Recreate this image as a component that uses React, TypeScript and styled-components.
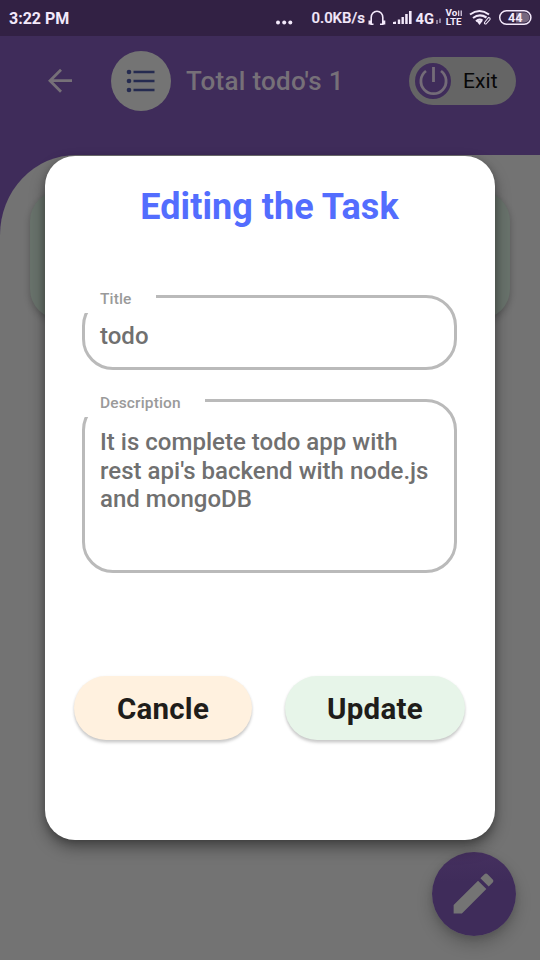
import React from 'react';
import styled, { createGlobalStyle } from 'styled-components';

const GlobalStyle = createGlobalStyle`
  * { box-sizing: border-box; }
  body { margin: 0; font-family: Roboto, sans-serif; }
  button { border: 0; font-family: inherit; }
`;

const Screen = styled.div`
  position: relative;
  display: flex;
  flex-direction: column;
  width: 540px;
  height: 960px;
  overflow: hidden;
  background: #3f2c5a;
`;

const StatusBar = styled.div`
  display: flex;
  align-items: center;
  justify-content: space-between;
  height: 36px;
  padding: 0 8px 0 9px;
  background: #322144;
  color: #f3e9fb;
`;

const Clock = styled.span`
  font-size: 16px;
  font-weight: 700;
  white-space: nowrap;
`;

const StatusIcons = styled.svg`
  display: block;
  width: 264px;
  height: 36px;
`;

const AppBar = styled.header`
  display: flex;
  align-items: center;
  height: 119px;
  padding: 0 24px 29px 47px;
`;

const BackIcon = styled.svg`
  width: 26px;
  height: 26px;
  margin-right: 38px;
`;

const ListBadge = styled.div`
  display: grid;
  place-items: center;
  width: 60px;
  height: 60px;
  border-radius: 50%;
  background: #747474;
`;

const AppTitle = styled.h1`
  flex: 1;
  margin: 0 0 0 15px;
  color: #767078;
  font-size: 26px;
  font-weight: 500;
  line-height: 30px;
  letter-spacing: 0.3px;
  white-space: nowrap;
`;

const ExitButton = styled.button`
  display: flex;
  align-items: center;
  gap: 12px;
  width: 107px;
  height: 48px;
  padding: 0 6px;
  border-radius: 24px;
  background: #656565;
  color: #080808;
  font-size: 21px;
  letter-spacing: 0.1px;
`;

const Body = styled.main`
  flex: 1;
  padding: 36px 30px;
  border-top-left-radius: 76px 80px;
  background: #737373;
`;

const TodoCard = styled.div`
  height: 128px;
  border-radius: 30px;
  background: #68726b;
  box-shadow: 0 3px 7px rgba(0, 0, 0, 0.24);
`;

const Fab = styled.button`
  position: absolute;
  right: 24px;
  bottom: 24px;
  display: grid;
  place-items: center;
  width: 84px;
  height: 84px;
  padding: 0 1px 1px 0;
  border-radius: 50%;
  background: linear-gradient(#45305f, #3f2c5a 35%);
  box-shadow: 0 8px 16px rgba(0, 0, 0, 0.22), 0 2px 6px rgba(0, 0, 0, 0.1);
`;

const Dialog = styled.section`
  position: absolute;
  top: 156px;
  left: 45px;
  display: flex;
  flex-direction: column;
  width: 450px;
  height: 684px;
  padding: 30px 30px 0 29px;
  border-radius: 30px;
  background: #fff;
  box-shadow: 0 8px 15px rgba(0, 0, 0, 0.36), 0 2px 7px rgba(0, 0, 0, 0.2);
`;

const DialogTitle = styled.h2`
  margin: 0 0 67px;
  color: #536dfe;
  font-size: 36px;
  font-weight: 700;
  line-height: 42px;
  letter-spacing: 0.05px;
  text-align: center;
  white-space: nowrap;
`;

const Field = styled.div<{ $height: number; $inset: number }>`
  position: relative;
  width: 375px;
  height: ${(p) => p.$height}px;
  margin: 0 0 29px 8px;
  padding: ${(p) => p.$inset}px 15px 0;
  border: 3px solid #bababa;
  border-radius: 31px;
  color: #707070;
  font-size: 24px;
  font-weight: 500;
  line-height: 28.5px;
  letter-spacing: 0.02px;
  white-space: pre;
`;

const FieldLabel = styled.label<{ $width: number }>`
  position: absolute;
  top: -8px;
  left: -4px;
  width: ${(p) => p.$width}px;
  height: 23px;
  padding-left: 19px;
  background: #fff;
  color: #9a9a9a;
  font-size: 15.5px;
  line-height: 18px;
  letter-spacing: 0.15px;
`;

const Actions = styled.div`
  display: flex;
  justify-content: space-between;
  margin-top: 74px;
`;

const ActionButton = styled.button<{ $tone: string; $width: number }>`
  width: ${(p) => p.$width}px;
  height: 64px;
  padding: 2px 0 0;
  border-radius: 32px;
  background: ${(p) => p.$tone};
  color: #1f1d1a;
  font-size: 29.5px;
  font-weight: 700;
  letter-spacing: 0.25px;
  box-shadow: 0 3px 3px rgba(0, 0, 0, 0.15), 0 1px 3px rgba(0, 0, 0, 0.1);
`;

function StatusGlyphs() {
  return (
    <StatusIcons viewBox="268 0 264 36" fill="#f3e9fb" fontFamily="Roboto, sans-serif" fontWeight="700">
      <circle cx="278" cy="22.500" r="2" />
      <circle cx="284.200" cy="22.500" r="2" />
      <circle cx="290.300" cy="22.500" r="2" />
      <text x="311.500" y="23" fontSize="15.500" textLength="53.500" lengthAdjust="spacingAndGlyphs" fontWeight="500" stroke="#f3e9fb" strokeWidth="0.200">0.0KB/s</text>
      <path d="M373.500 24.300h-2.300v-6.800a5.800 6.300 0 0 1 11.600 0v6.800H380" fill="none" stroke="#f3e9fb" strokeWidth="1.600" />
      <path d="M368.500 20.500h2.700v4h-2.700zM382.800 20.500h2.500v4h-2.500z" />
      <path d="M393 22l3-.5V24h-3zM397.800 19.500h2.400V24h-2.400zM401.500 17h2.400v7h-2.400zM405.200 14h2.500v10h-2.500zM409 11h2.600v13H409z" />
      <text x="415.500" y="23.500" fontSize="15.500" textLength="18.500" lengthAdjust="spacingAndGlyphs">4G</text>
      <path d="M437 20v4M440 18.500v4.500" stroke="#c9bdd5" strokeWidth="1.200" />
      <text x="445.500" y="15.800" fontSize="8.300" textLength="11.800" lengthAdjust="spacingAndGlyphs">Vo</text>
      <path d="M458.700 10.500v5.500M461.200 10.500v5.500" stroke="#f3e9fb" strokeWidth="1.100" />
      <text x="445.700" y="25" fontSize="9" textLength="15.800" lengthAdjust="spacingAndGlyphs">LTE</text>
      <g fill="none" stroke="#f3e9fb" strokeWidth="2.100">
        <path d="M470 14.500q9.500-7 19 0M473 18q6.500-5 13.500-.500M476 21.200q3.300-2.800 6.500-.500" />
        <path d="M484.500 22.500l4-5q2 0 1.500 2l-4 4.500q-2 0-1.500-1.500z" strokeWidth="1.100" />
      </g>
      <path d="M476.500 21l3 4 3-4z" />
      <rect x="499.700" y="10.700" width="31.200" height="13.600" rx="6.800" fill="none" stroke="#f3e9fb" strokeWidth="1.500" />
      <path d="M516 12.500h8.500a5 5 0 0 1 0 10H516z" fill="#75677f" />
      <text x="508" y="21.800" fontSize="12" textLength="14.500" lengthAdjust="spacingAndGlyphs">44</text>
    </StatusIcons>
  );
}

export default function App() {
  return (
    <>
      <GlobalStyle />
      <Screen>
        <StatusBar>
          <Clock>3:22 PM</Clock>
          <StatusGlyphs />
        </StatusBar>
        <AppBar>
          <BackIcon viewBox="0 0 26 26" fill="none" stroke="#767078" strokeWidth="2.800">
            <path d="M25 12.700H3M14 1.700L3 12.700l11 11" />
          </BackIcon>
          <ListBadge>
            <svg width="30" height="24" viewBox="0 0 30 24" fill="#252b50">
              <circle cx="3" cy="3" r="2.300" />
              <circle cx="3" cy="12" r="2.300" />
              <circle cx="3" cy="21" r="2.300" />
              <path d="M7.500 1.700H28.500v2.600H7.500zM7.500 10.700H28.500v2.600H7.500zM7.500 19.700H28.500v2.600H7.500z" />
            </svg>
          </ListBadge>
          <AppTitle>Total todo's 1</AppTitle>
          <ExitButton>
            <svg width="36" height="36" viewBox="0 0 36 36" fill="none" stroke="#746c78" strokeWidth="2.800">
              <circle cx="18" cy="18" r="18" fill="#3f2c5a" stroke="none" />
              <path d="M18.500 4v15M11 8a12.600 12.600 0 1 0 15 0" />
            </svg>
            Exit
          </ExitButton>
        </AppBar>
        <Body>
          <TodoCard />
        </Body>
        <Fab aria-label="Edit">
          <svg width="53" height="53" viewBox="0 0 24 24" fill="#747474">
            <path d="M3 17.250V21h3.750L17.810 9.940l-3.750-3.750L3 17.250zM20.710 7.040a1 1 0 0 0 0-1.410l-2.340-2.340a1 1 0 0 0-1.410 0l-1.830 1.830 3.750 3.750 1.830-1.830z" />
          </svg>
        </Fab>
        <Dialog>
          <DialogTitle>Editing the Task</DialogTitle>
          <Field $height={75} $inset={24}>
            <FieldLabel $width={75}>Title</FieldLabel>
            todo
          </Field>
          <Field $height={174} $inset={26}>
            <FieldLabel $width={124}>Description</FieldLabel>
            {"It is complete todo app with\nrest api's backend with node.js\nand mongoDB"}
          </Field>
          <Actions>
            <ActionButton $tone="#fff1df" $width={178}>Cancle</ActionButton>
            <ActionButton $tone="#e7f5e9" $width={180}>Update</ActionButton>
          </Actions>
        </Dialog>
      </Screen>
    </>
  );
}
